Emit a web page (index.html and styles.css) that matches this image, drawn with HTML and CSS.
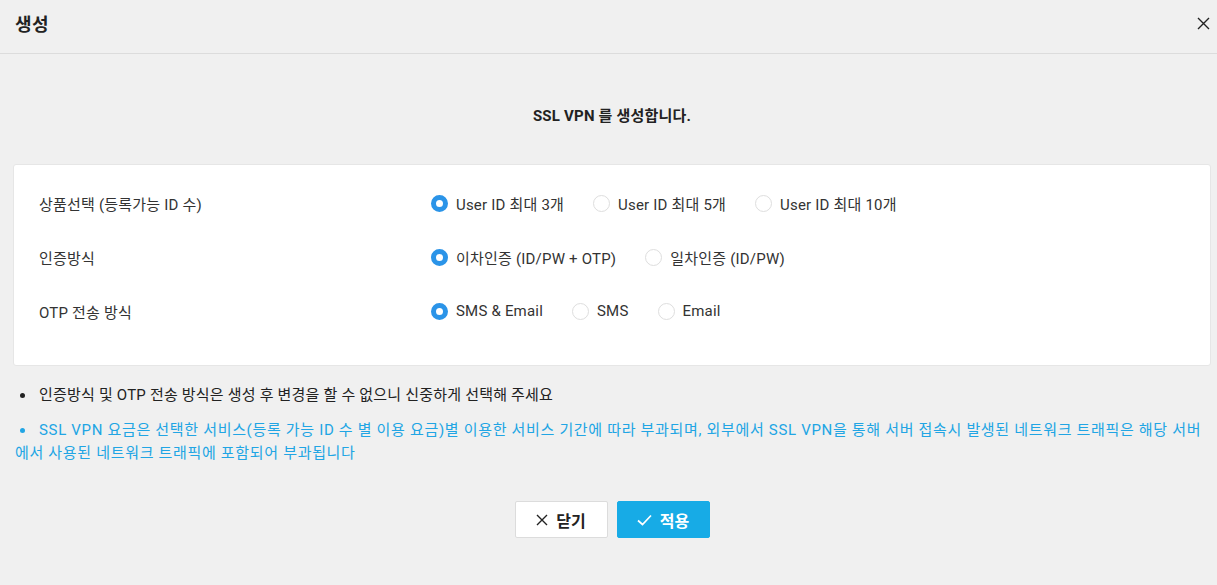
FILE: index.html
```html
<!DOCTYPE html>
<html lang="ko">
<head>
<meta charset="utf-8">
<link rel="stylesheet" href="styles.css">
</head>
<body>
<div class="modal">
  <header class="modal-head">
    <h1 class="modal-title">생성</h1>
    <button class="close-btn" aria-label="close">
      <svg width="13" height="13" viewBox="0 0 13 13"><path d="M1 1 L12 12 M12 1 L1 12" stroke="#222" stroke-width="1.4" fill="none"/></svg>
    </button>
  </header>
  <div class="modal-body">
    <p class="lead">SSL VPN 를 생성합니다.</p>
    <div class="card">
      <div class="row">
        <div class="label">상품선택 (등록가능 ID 수)</div>
        <div class="options">
          <label class="opt"><span class="radio on"></span>User ID 최대 3개</label>
          <label class="opt"><span class="radio"></span>User ID 최대 5개</label>
          <label class="opt"><span class="radio"></span>User ID 최대 10개</label>
        </div>
      </div>
      <div class="row">
        <div class="label">인증방식</div>
        <div class="options">
          <label class="opt"><span class="radio on"></span>이차인증 (ID/PW + OTP)</label>
          <label class="opt"><span class="radio"></span>일차인증 (ID/PW)</label>
        </div>
      </div>
      <div class="row">
        <div class="label">OTP 전송 방식</div>
        <div class="options">
          <label class="opt"><span class="radio on"></span>SMS &amp; Email</label>
          <label class="opt"><span class="radio"></span>SMS</label>
          <label class="opt"><span class="radio"></span>Email</label>
        </div>
      </div>
    </div>
    <ul class="notes">
      <li class="note"><span class="dot"></span>인증방식 및 OTP 전송 방식은 생성 후 변경을 할 수 없으니 신중하게 선택해 주세요</li>
      <li class="note blue"><span class="dot"></span>SSL VPN 요금은 선택한 서비스(등록 가능 ID 수 별 이용 요금)별 이용한 서비스 기간에 따라 부과되며, 외부에서 SSL VPN을 통해 서버 접속시 발생된 네트워크 트래픽은 해당 서버에서 사용된 네트워크 트래픽에 포함되어 부과됩니다</li>
    </ul>
    <div class="actions">
      <button class="btn btn-cancel">
        <svg width="12" height="12" viewBox="0 0 12 12"><path d="M1 1 L11 11 M11 1 L1 11" stroke="#222" stroke-width="1.4" fill="none"/></svg>
        닫기
      </button>
      <button class="btn btn-ok">
        <svg width="15" height="12" viewBox="0 0 15 12"><path d="M1 6.5 L5.5 10.5 L14 1.5" stroke="#fff" stroke-width="1.7" fill="none"/></svg>
        적용
      </button>
    </div>
  </div>
</div>
</body>
</html>
```
FILE: styles.css
```css
* { box-sizing: border-box; }
html, body { margin: 0; padding: 0; }
body {
  width: 1217px;
  height: 585px;
  background: #f0f0f0;
  font-family: Roboto, "Noto Sans CJK KR", sans-serif;
  font-size: 15px;
  letter-spacing: 0.2px;
  color: #222;
  overflow: hidden;
}
.modal-head {
  height: 54px;
  border-bottom: 1px solid #dcdcdc;
  display: flex;
  align-items: center;
  justify-content: space-between;
  padding: 0 7px 0 15px;
}
.modal-title {
  margin: 0;
  font-size: 18px;
  font-weight: 700;
  color: #222;
  padding-bottom: 8px;
  letter-spacing: 0.5px;
}
.close-btn {
  background: none;
  border: 0;
  padding: 0;
  display: flex;
  cursor: pointer;
  margin-bottom: 6px;
}
.modal-body {
  padding: 0 6px 0 13px;
}
.lead {
  margin: 52px 0 0;
  text-align: center;
  font-weight: 700;
  font-size: 15px;
  line-height: 20px;
  color: #222;
}
.card {
  margin-top: 38px;
  background: #fff;
  border: 1px solid #e6e6e6;
  border-radius: 3px;
  padding: 11px 0 27px 25px;
  display: flex;
  flex-direction: column;
}
.row {
  display: flex;
  align-items: center;
  height: 54px;
}
.label {
  width: 392px;
  color: #333;
}
.options {
  display: flex;
  gap: 29px;
}
.opt {
  display: flex;
  align-items: center;
  gap: 8px;
  color: #333;
}
.radio {
  width: 17px;
  height: 17px;
  border-radius: 50%;
  border: 1px solid #dedede;
  background: #fff;
}
.radio.on {
  border: 5px solid #2b94e8;
}
.notes {
  list-style: none;
  margin: 18px 0 0;
  padding: 0 0 0 2px;
}
.note {
  line-height: 23px;
  color: #222;
}
.note + .note { margin-top: 12px; }
.note.blue {
  color: #21a5e4;
  letter-spacing: 0.68px;
}
.dot {
  display: inline-block;
  width: 5px;
  height: 5px;
  border-radius: 50%;
  background: currentColor;
  margin: 0 14px 0 5px;
  vertical-align: middle;
  position: relative;
  top: -1px;
}
.actions {
  display: flex;
  justify-content: center;
  gap: 9px;
  margin-top: 36px;
}
.btn {
  height: 37px;
  width: 93px;
  border-radius: 2px;
  font-family: inherit;
  font-size: 16px;
  font-weight: 700;
  display: flex;
  align-items: center;
  justify-content: center;
  gap: 8px;
  cursor: pointer;
}
.btn-cancel {
  background: #fff;
  border: 1px solid #dcdcdc;
  color: #222;
}
.btn-ok {
  background: #17abe6;
  border: 1px solid #17abe6;
  color: #fff;
}
```
